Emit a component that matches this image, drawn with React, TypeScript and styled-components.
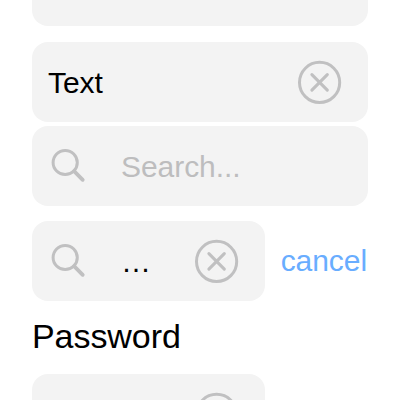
import React from 'react';
import styled, { createGlobalStyle } from 'styled-components';

const GlobalStyle = createGlobalStyle`
  * { box-sizing: border-box; }
  body {
    margin: 0;
    background: #fff;
    overflow: hidden;
    font-family: "Liberation Sans", Helvetica, Arial, sans-serif;
  }
`;

const Screen = styled.main`
  width: 400px;
  height: 400px;
  overflow: hidden;
  padding: 0 32px;
  display: flex;
  flex-direction: column;
`;

const Field = styled.div<{ $narrow?: boolean; $gap?: number }>`
  display: flex;
  align-items: center;
  flex-shrink: 0;
  width: ${(p) => (p.$narrow ? '233px' : '100%')};
  height: 80px;
  margin-top: ${(p) => p.$gap ?? 0}px;
  padding: 0 26px 0 16px;
  border-radius: 16px;
  background: #f3f3f3;
`;

const FieldEnd = styled.div`
  flex-shrink: 0;
  height: 26px;
  border-radius: 0 0 16px 16px;
  background: #f3f3f3;
`;

const Value = styled.span<{ $muted?: boolean }>`
  flex: 1;
  min-width: 0;
  padding-top: 2px;
  font-size: 30px;
  line-height: 36px;
  letter-spacing: -0.06px;
  white-space: nowrap;
  color: ${(p) => (p.$muted ? '#bdbdbe' : '#000')};
`;

const Row = styled.div`
  display: flex;
  align-items: center;
  justify-content: space-between;
  flex-shrink: 0;
  margin-top: 15px;
`;

const Cancel = styled.button`
  margin-right: 1px;
  padding: 0;
  border: 0;
  background: none;
  font: 30px/36px "Liberation Sans", Helvetica, Arial, sans-serif;
  letter-spacing: -0.06px;
  color: #69adff;
`;

const Title = styled.h2`
  margin: 15px 0 0;
  height: 42px;
  flex-shrink: 0;
  font-size: 34px;
  font-weight: 400;
  line-height: 41px;
  letter-spacing: -0.06px;
  color: #000;
`;

const SearchSvg = styled.svg`
  flex-shrink: 0;
  margin-right: 33px;
`;

const ClearSvg = styled.svg`
  flex-shrink: 0;
`;

const SearchIcon = () => (
  <SearchSvg width="40" height="40" viewBox="0 0 40 40" fill="none" stroke="#c0c0c1" strokeLinecap="round">
    <circle cx="17.2" cy="16.5" r="12.1" strokeWidth="3" />
    <path d="M26.1 25.2 L34.7 33.8" strokeWidth="3.8" />
  </SearchSvg>
);

const ClearIcon = () => (
  <ClearSvg width="44" height="44" viewBox="0 0 44 44" fill="none" stroke="#c0c0c1" strokeLinecap="round">
    <circle cx="21.6" cy="22.4" r="20.1" strokeWidth="3" />
    <path d="M13.9 14.7 L29.3 30.1 M29.3 14.7 L13.9 30.1" strokeWidth="3.1" />
  </ClearSvg>
);

export default function App() {
  return (
    <>
      <GlobalStyle />
      <Screen>
        <FieldEnd />
        <Field $gap={16}>
          <Value>Text</Value>
          <ClearIcon />
        </Field>
        <Field $gap={4}>
          <SearchIcon />
          <Value $muted>Search...</Value>
        </Field>
        <Row>
          <Field $narrow>
            <SearchIcon />
            <Value>…</Value>
            <ClearIcon />
          </Field>
          <Cancel>cancel</Cancel>
        </Row>
        <Title>Password</Title>
        <Field $narrow $gap={16}>
          <Value />
          <ClearIcon />
        </Field>
      </Screen>
    </>
  );
}
